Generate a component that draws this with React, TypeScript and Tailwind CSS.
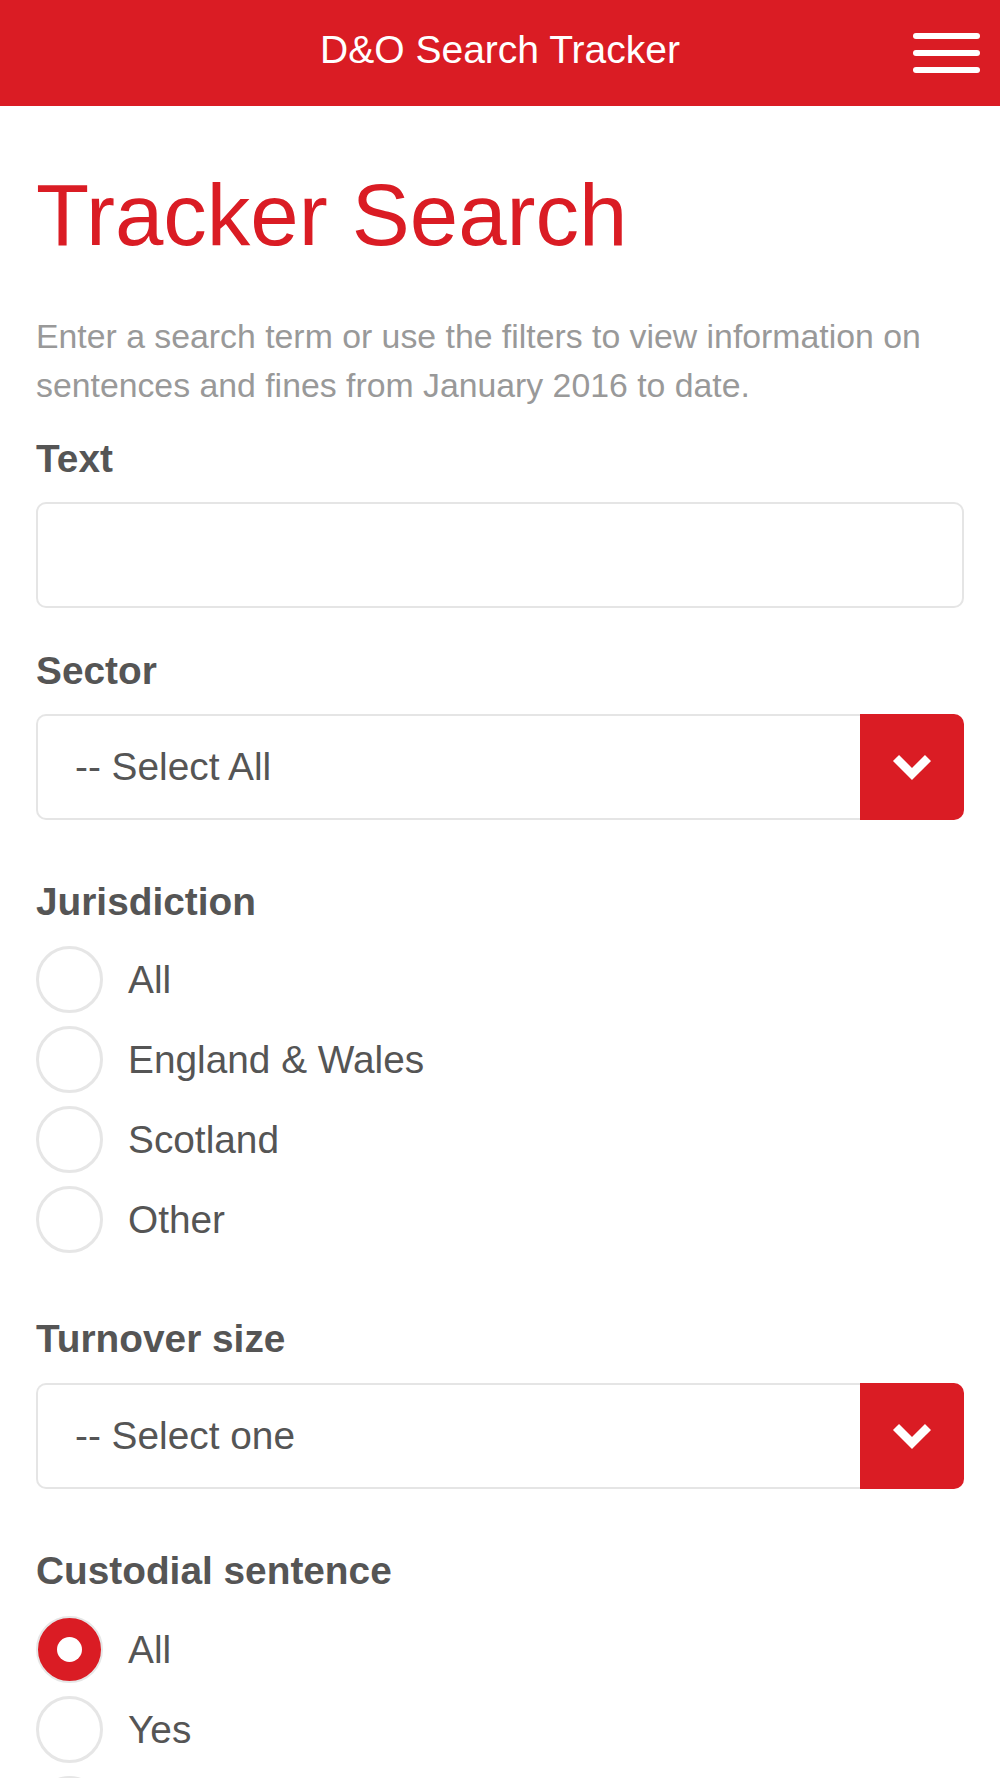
import React from "react";

const RED = "bg-[#da1c24]";

function Chevron() {
  return (
    <svg width="42" height="28" viewBox="0 0 42 28" aria-hidden="true">
      <polyline
        points="5,5 21,21 37,5"
        fill="none"
        stroke="#ffffff"
        strokeWidth="8.5"
        strokeLinecap="butt"
        strokeLinejoin="miter"
      />
    </svg>
  );
}

function Label({ children, className = "" }: { children: React.ReactNode; className?: string }) {
  return (
    <div className={`text-[38.8px] leading-[44px] font-bold text-[#555555] ${className}`}>{children}</div>
  );
}

function SelectBox({ value }: { value: string }) {
  return (
    <div className="flex h-[106px] w-full">
      <div className="flex flex-1 items-center rounded-l-[10px] border-2 border-r-0 border-[#e5e5e5] bg-white pl-[37px] text-[38.8px] text-[#555555]">
        {value}
      </div>
      <div className={`flex w-[104px] items-center justify-center rounded-r-[10px] ${RED}`}>
        <Chevron />
      </div>
    </div>
  );
}

function Radio({ label, checked = false }: { label: string; checked?: boolean }) {
  return (
    <div className="flex h-[67px] items-center">
      {checked ? (
        <div className="flex h-[67px] w-[67px] shrink-0 items-center justify-center rounded-full border-2 border-[#e6e6e6] bg-[#da1c24]">
          <div className="h-[25px] w-[25px] rounded-full bg-white" />
        </div>
      ) : (
        <div className="h-[67px] w-[67px] shrink-0 rounded-full border-[3px] border-[#e6e6e6] bg-white" />
      )}
      <span className="ml-[25px] text-[38.8px] leading-[44px] text-[#555555]">{label}</span>
    </div>
  );
}

export default function App() {
  return (
    <div className="min-h-screen bg-white font-['Liberation_Sans',Arial,sans-serif]">
      <header className={`relative flex h-[106px] items-center justify-center ${RED}`}>
        <span className="pb-[5px] text-[39px] text-white">D&amp;O Search Tracker</span>
        <button className="absolute right-[20px] top-[33px] flex w-[67px] flex-col gap-[11px]" aria-label="Menu">
          <span className="block h-[6px] w-full rounded-full bg-white" />
          <span className="block h-[6px] w-full rounded-full bg-white" />
          <span className="block h-[6px] w-full rounded-full bg-white" />
        </button>
      </header>

      <main className="px-[36px]">
        <h1 className="mt-[66px] text-[87px] leading-[86px] font-normal text-[#da1c24]">Tracker Search</h1>

        <p className="mt-[54px] text-[33.8px] leading-[49px] text-[#999999]">
          Enter a search term or use the filters to view information on sentences and fines from January 2016 to date.
        </p>

        <Label className="mt-[27px]">Text</Label>
        <input
          type="text"
          className="mt-[21px] block h-[106px] w-full rounded-[10px] border-2 border-[#e5e5e5] bg-white px-[37px] text-[38.8px] text-[#555555] outline-none"
        />

        <Label className="mt-[41px]">Sector</Label>
        <div className="mt-[21px]">
          <SelectBox value="-- Select All" />
        </div>

        <Label className="mt-[60px]">Jurisdiction</Label>
        <div className="mt-[22px] flex flex-col gap-[13px]">
          <Radio label="All" />
          <Radio label="England & Wales" />
          <Radio label="Scotland" />
          <Radio label="Other" />
        </div>

        <Label className="mt-[64px]">Turnover size</Label>
        <div className="mt-[22px]">
          <SelectBox value="-- Select one" />
        </div>

        <Label className="mt-[60px]">Custodial sentence</Label>
        <div className="mt-[23px] flex flex-col gap-[13px] pb-[40px]">
          <Radio label="All" checked />
          <Radio label="Yes" />
          <Radio label="No" />
        </div>
      </main>
    </div>
  );
}
